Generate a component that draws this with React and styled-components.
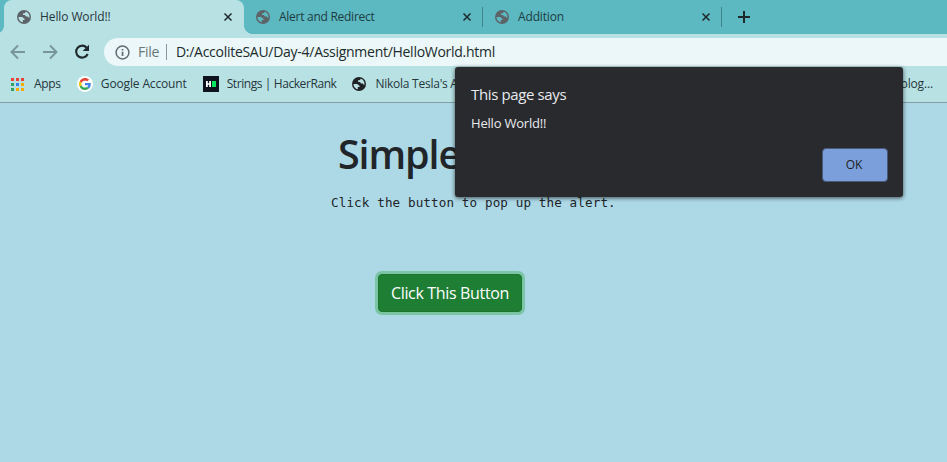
import React from "react";
import styled, { createGlobalStyle } from "styled-components";

const GlobalStyle = createGlobalStyle`
  * { box-sizing: border-box; }
  body { margin: 0; overflow: hidden; font-family: "Open Sans", "Noto Sans", sans-serif; color: #212529; }
  svg { display: block; flex: none; }
`;

const Window = styled.div`
  position: relative;
  display: flex;
  flex-direction: column;
  width: 947px;
  height: 462px;
  overflow: hidden;
  background: #add8e6;
`;

const TabStrip = styled.div`
  display: flex;
  height: 34px;
  padding-left: 4px;
  background: #5cb8c1;
`;

const Tab = styled.div`
  position: relative;
  display: flex;
  align-items: center;
  width: ${(p) => (p.$active ? 240 : 239)}px;
  height: 34px;
  padding: 0 11px 0 ${(p) => (p.$active ? 13 : 12)}px;
  font-size: 12px;
  line-height: 34px;
  color: ${(p) => (p.$active ? "#26363b" : "#1d3c41")};
  background: ${(p) => (p.$active ? "#b8e1e4" : "transparent")};
  border-radius: 8px 8px 0 0;

  &::before, &::after {
    content: "";
    display: ${(p) => (p.$active ? "block" : "none")};
    position: absolute;
    bottom: 0;
    width: 8px;
    height: 8px;
  }
  &::before { left: -8px; background: radial-gradient(circle at 0 0, transparent 7.5px, #b8e1e4 8px); }
  &::after { right: -8px; background: radial-gradient(circle at 100% 0, transparent 7.5px, #b8e1e4 8px); }
`;

const TabTitle = styled.span`
  flex: 1;
  margin-left: 9px;
  white-space: nowrap;
  letter-spacing: ${(p) => p.$tracking}px;
`;

const Divider = styled.span`
  width: 1px;
  height: 20px;
  margin: 7px 0 0 -1px;
  background: #3f8389;
`;

const NewTab = styled.div`
  display: flex;
  align-items: center;
  padding-left: 16px;
`;

const Toolbar = styled.div`
  display: flex;
  align-items: center;
  height: 36px;
  padding-left: 10px;
  background: #b8e1e4;
`;

const NavButtons = styled.div`
  display: flex;
  gap: 16px;
  width: 94px;
`;

const Omnibox = styled.div`
  display: flex;
  align-items: center;
  flex: 1;
  height: 28px;
  padding-left: 11px;
  background: #ebf7f8;
  border-radius: 14px 0 0 14px;
  font-size: 14px;
  line-height: 28px;
  white-space: nowrap;
`;

const Scheme = styled.span`
  margin-left: 8px;
  color: #69777a;
  letter-spacing: -0.3px;
`;

const SchemeRule = styled.span`
  width: 1px;
  height: 16px;
  margin: 0 9px 0 7px;
  background: #87969a;
`;

const Address = styled.span`
  color: #202b2e;
  letter-spacing: -0.28px;
`;

const BookmarkBar = styled.div`
  display: flex;
  align-items: center;
  height: 33px;
  padding: 0 14px 4px 11px;
  background: #b8e1e4;
  border-bottom: 1px solid #82a0a3;
`;

const Bookmark = styled.div`
  display: flex;
  align-items: center;
  gap: ${(p) => p.$gap ?? 8}px;
  margin-right: 16px;
  font-size: 12px;
  line-height: 20px;
  white-space: nowrap;
  color: #26363b;
  letter-spacing: ${(p) => p.$tracking ?? 0}px;

  &:last-child { margin: 0 0 0 auto; }
`;

const IconDisc = styled.span`
  display: grid;
  place-items: center;
  width: 16px;
  height: 16px;
  border-radius: 50%;
  background: #fff;
`;

const Page = styled.main`
  display: flex;
  flex-direction: column;
  align-items: flex-start;
`;

const Heading = styled.h1`
  margin: 27px 0 0 338px;
  font-size: 39.5px;
  font-weight: 600;
  line-height: 48px;
  letter-spacing: -1.1px;
`;

const Description = styled.pre`
  margin: 14px 0 0 331px;
  font-family: "DejaVu Sans Mono", monospace;
  font-size: 12.6px;
  letter-spacing: 0.115px;
  line-height: 21px;
`;

const PageButton = styled.button`
  width: 144px;
  height: 38px;
  margin: 61px 0 0 378px;
  padding: 0;
  border: 1px solid #1c7430;
  border-radius: 4px;
  background: #1e7e34;
  box-shadow: 0 0 0 3px rgba(72, 180, 97, 0.5);
  color: #fff;
  font: 16px "Open Sans", sans-serif;
  letter-spacing: -0.34px;
  white-space: nowrap;
`;

const Dialog = styled.div`
  position: absolute;
  left: 455px;
  top: 67px;
  display: flex;
  flex-direction: column;
  width: 448px;
  height: 130px;
  padding: 16px 15px 15px 16px;
  border-radius: 3px;
  background: #292a2d;
  box-shadow: 0 1px 4px rgba(0, 0, 0, 0.65);
  color: #e8eaed;
`;

const DialogTitle = styled.div`
  font-size: 15px;
  line-height: 23px;
  letter-spacing: -0.37px;
`;

const DialogMessage = styled.div`
  margin-top: 7px;
  font-size: 13px;
  font-weight: 500;
  line-height: 20px;
  letter-spacing: -0.2px;
`;

const OkButton = styled.button`
  width: 66px;
  height: 34px;
  margin: auto 0 0 auto;
  padding: 0 2px 1px 0;
  border: 1px solid #48597a;
  border-radius: 4px;
  background: #7b9fda;
  color: #202124;
  font: 500 12px "Open Sans", sans-serif;
`;

const Globe = ({ color, land = "#b8e1e4" }) => (
  <svg width="14" height="14" viewBox="0 0 14 14">
    <circle cx="7" cy="7" r="7" fill={color} />
    <path d="M1.500 7H4.800c1.300 0 1.500 1.700 2.800 1.700V10H5.800v2.300C3.300 11.900 1.500 9.700 1.500 7Z" fill={land} />
    <path d="M8.600 1.700C8.600 3 7.700 3.200 6.100 3.200V5h1.500c.9 0 .9 1.500 1.700 1.500h1.400c.8 0 .6 1.500 1.700 1.500C13 4.900 11.300 2.400 8.600 1.700Z" fill={land} />
  </svg>
);

const Close = () => (
  <svg width="10" height="10" viewBox="0 0 10 10">
    <path d="M1.500 1.500l7 7M8.500 1.500l-7 7" stroke="#1d292c" strokeWidth="1.500" />
  </svg>
);

const Arrow = ({ forward }) => (
  <svg width="16" height="16" viewBox="0 0 16 16" fill="none" stroke="#78959a" strokeWidth="1.900">
    <path d={forward ? "M1 8h13M8 1.500L14.500 8L8 14.500" : "M15 8H2M8 1.500L1.500 8L8 14.500"} />
  </svg>
);

const Reload = () => (
  <svg width="16" height="16" viewBox="0 0 16 16">
    <path d="M12.700 3.700A6 6 0 1 0 13.700 10" fill="none" stroke="#1f292c" strokeWidth="2.100" />
    <path d="M15 .8v6.300H8.700Z" fill="#1f292c" />
  </svg>
);

const Info = () => (
  <svg width="15" height="15" viewBox="0 0 15 15">
    <circle cx="7.500" cy="7.500" r="6.400" fill="none" stroke="#5f6b6e" strokeWidth="1.500" />
    <path d="M6.700 6.700h1.700v4.300H6.700zM6.700 3.900h1.700v1.600H6.700z" fill="#5f6b6e" />
  </svg>
);

const appDots = ["#ea4335", "#ea4335", "#ea4335", "#34a060", "#2d84f2", "#f9ab00", "#34a060", "#f9ab00", "#f9ab00"];
const AppsGrid = () => (
  <svg width="13" height="13" viewBox="0 0 13 13" shapeRendering="crispEdges">
    {appDots.map((fill, i) => (
      <rect key={i} x={(i % 3) * 5} y={Math.floor(i / 3) * 5} width="3" height="3" fill={fill} />
    ))}
  </svg>
);

const GoogleMark = () => (
  <svg width="12" height="12" viewBox="0 0 48 48">
    <path fill="#ea4335" d="M24 9.500c3.540 0 6.710 1.220 9.210 3.600l6.850-6.850C35.900 2.380 30.470 0 24 0 14.620 0 6.510 5.380 2.560 13.220l7.980 6.190C12.430 13.720 17.740 9.500 24 9.500z" />
    <path fill="#4285f4" d="M46.980 24.550c0-1.570-.15-3.090-.38-4.550H24v9.020h12.940c-.58 2.960-2.260 5.480-4.780 7.180l7.730 6c4.510-4.180 7.090-10.360 7.090-17.650z" />
    <path fill="#fbbc05" d="M10.530 28.590c-.48-1.450-.76-2.990-.76-4.590s.27-3.140.76-4.590l-7.980-6.190C.92 16.460 0 20.120 0 24s.92 7.540 2.560 10.780l7.970-6.190z" />
    <path fill="#34a853" d="M24 48c6.480 0 11.930-2.130 15.890-5.810l-7.730-6c-2.150 1.450-4.920 2.300-8.160 2.300-6.260 0-11.570-4.220-13.470-9.910l-7.980 6.190C6.510 42.620 14.620 48 24 48z" />
  </svg>
);

const HackerRank = () => (
  <svg width="16" height="16" viewBox="0 0 16 16">
    <rect width="16" height="16" fill="#0e141e" />
    <path d="M3 5h1.800v2.200h1.400V5H8v6H6.200V8.800H4.800V11H3z" fill="#fff" />
    <rect x="9" y="5" width="4" height="6" fill="#0be661" />
  </svg>
);

export default function App() {
  return (
    <Window>
      <GlobalStyle />
      <TabStrip>
        <Tab $active>
          <Globe color="#5d6468" />
          <TabTitle $tracking={-0.1}>Hello World!!</TabTitle>
          <Close />
        </Tab>
        <Tab>
          <Globe color="#5d6468" land="#5cb8c1" />
          <TabTitle $tracking={-0.27}>Alert and Redirect</TabTitle>
          <Close />
        </Tab>
        <Divider />
        <Tab>
          <Globe color="#5d6468" land="#5cb8c1" />
          <TabTitle $tracking={-0.15}>Addition</TabTitle>
          <Close />
        </Tab>
        <Divider />
        <NewTab>
          <svg width="12" height="12" viewBox="0 0 12 12">
            <path d="M6 0v12M0 6h12" stroke="#1d292c" strokeWidth="2" />
          </svg>
        </NewTab>
      </TabStrip>

      <Toolbar>
        <NavButtons>
          <Arrow />
          <Arrow forward />
          <Reload />
        </NavButtons>
        <Omnibox>
          <Info />
          <Scheme>File</Scheme>
          <SchemeRule />
          <Address>D:/AccoliteSAU/Day-4/Assignment/HelloWorld.html</Address>
        </Omnibox>
      </Toolbar>

      <BookmarkBar>
        <Bookmark $gap={10} $tracking={-0.3}>
          <AppsGrid />
          Apps
        </Bookmark>
        <Bookmark $tracking={-0.14}>
          <IconDisc>
            <GoogleMark />
          </IconDisc>
          Google Account
        </Bookmark>
        <Bookmark $tracking={-0.42}>
          <HackerRank />
          Strings | HackerRank
        </Bookmark>
        <Bookmark $gap={9} $tracking={-0.25}>
          <Globe color="#202124" />
          Nikola Tesla's A
        </Bookmark>
        <Bookmark $tracking={-0.15}>blog...</Bookmark>
      </BookmarkBar>

      <Page>
        <Heading>Simple</Heading>
        <Description>Click the button to pop up the alert.</Description>
        <PageButton>Click This Button</PageButton>
      </Page>

      <Dialog>
        <DialogTitle>This page says</DialogTitle>
        <DialogMessage>Hello World!!</DialogMessage>
        <OkButton>OK</OkButton>
      </Dialog>
    </Window>
  );
}
